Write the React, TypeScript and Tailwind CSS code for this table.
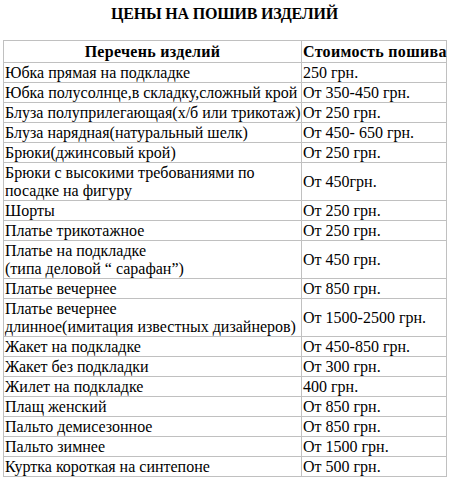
import React from "react";

const rows: [string[], string][] = [
  [["Юбка прямая на подкладке"], "250 грн."],
  [["Юбка полусолнце,в складку,сложный крой"], "От 350-450 грн."],
  [["Блуза полуприлегающая(х/б или трикотаж)"], "От 250 грн."],
  [["Блуза нарядная(натуральный шелк)"], "От 450- 650 грн."],
  [["Брюки(джинсовый крой)"], "От 250 грн."],
  [["Брюки с высокими требованиями по", "посадке на фигуру"], "От 450грн."],
  [["Шорты"], "От 250 грн."],
  [["Платье трикотажное"], "От 250 грн."],
  [["Платье на подкладке", "(типа деловой “ сарафан”)"], "От 450 грн."],
  [["Платье вечернее"], "От 850 грн."],
  [["Платье вечернее", "длинное(имитация известных дизайнеров)"], "От 1500-2500 грн."],
  [["Жакет на подкладке"], "От 450-850 грн."],
  [["Жакет без подкладки"], "От 300 грн."],
  [["Жилет на подкладке"], "400 грн."],
  [["Плащ женский"], "От 850 грн."],
  [["Пальто демисезонное"], "От 850 грн."],
  [["Пальто зимнее"], "От 1500 грн."],
  [["Куртка короткая на синтепоне"], "От 500 грн."],
];

export default function App() {
  return (
    <div className="w-[449px] h-[481px] bg-white text-black overflow-hidden font-['Liberation_Serif','Times_New_Roman',serif]">
      <h1 className="text-center font-bold text-[16px] leading-[20px] pt-[4px] h-[40px] tracking-[-0.2px]">
        ЦЕНЫ НА ПОШИВ ИЗДЕЛИЙ
      </h1>
      <table className="ml-[3px] w-[443px] table-fixed border-collapse text-[16px] leading-[18px]">
        <colgroup>
          <col className="w-[298px]" />
          <col className="w-[145px]" />
        </colgroup>
        <thead>
          <tr className="h-[22px]">
            <th className="border border-[#c0c0c0] px-[1px] text-center font-bold tracking-[0.3px]">
              Перечень изделий
            </th>
            <th className="border border-[#c0c0c0] px-[1px] text-center font-bold tracking-[0.3px] whitespace-nowrap">
              Стоимость пошива
            </th>
          </tr>
        </thead>
        <tbody>
          {rows.map(([name, price], i) => (
            <tr key={i} className={name.length > 1 ? "h-[38px]" : "h-[20px]"}>
              <td className="border border-[#c0c0c0] px-[1px] py-0 align-middle whitespace-nowrap">
                {name.map((l, j) => (
                  <div key={j}>{l}</div>
                ))}
              </td>
              <td className="border border-[#c0c0c0] px-[1px] py-0 align-middle whitespace-nowrap">
                {price}
              </td>
            </tr>
          ))}
        </tbody>
      </table>
    </div>
  );
}
